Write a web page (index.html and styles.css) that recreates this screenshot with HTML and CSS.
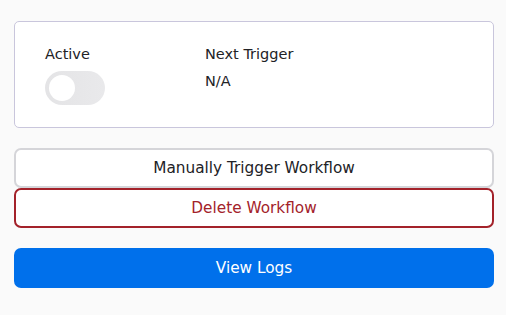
FILE: index.html
```html
<!DOCTYPE html>
<html lang="en">
<head>
    <meta charset="UTF-8">
    <meta name="viewport" content="width=device-width, initial-scale=1.0">
    <title>Workflow</title>
    <link rel="stylesheet" href="styles.css">
</head>
<body>
    <div class="panel">
        <div class="status-card">
            <div class="status-item">
                <div class="status-label">Active</div>
                <label class="toggle">
                    <input type="checkbox" class="toggle-input">
                    <span class="toggle-track"></span>
                </label>
            </div>
            <div class="status-item">
                <div class="status-label">Next Trigger</div>
                <div class="status-value">N/A</div>
            </div>
        </div>

        <div class="actions">
            <button class="action-button">Manually Trigger Workflow</button>
            <button class="action-button danger">Delete Workflow</button>
        </div>

        <button class="logs-button">View Logs</button>
    </div>
</body>
</html>
```

FILE: styles.css
```css
:root {
    --primary: #0070eb;
    --danger: #a3222a;
    --background: #fafafa;
    --text: #222226;
}

* {
    box-sizing: border-box;
    margin: 0;
    padding: 0;
}

body {
    font-family: 'DejaVu Sans', sans-serif;
    background-color: var(--background);
    color: var(--text);
    padding: 21px 12px 0 14px;
}

.status-card {
    background: #fff;
    border: 1px solid #c9c6dc;
    border-radius: 5px;
    height: 107px;
    padding: 23px 30px;
    display: grid;
    grid-template-columns: 160px 1fr;
}

.status-label {
    font-size: 14.5px;
    line-height: 18px;
    margin-bottom: 8px;
}

.status-value {
    font-size: 14.5px;
    line-height: 20px;
}

.toggle {
    display: inline-block;
    position: relative;
    width: 60px;
    height: 34px;
}

.toggle-input {
    display: none;
}

.toggle-track {
    display: block;
    width: 100%;
    height: 100%;
    border-radius: 17px;
    background: linear-gradient(90deg, #e4e4e6, #e9e9eb);
}

.toggle-track::before {
    content: '';
    position: absolute;
    left: 4px;
    top: 4px;
    width: 26px;
    height: 26px;
    border-radius: 50%;
    background: #fff;
}

.actions {
    margin-top: 20px;
    display: flex;
    flex-direction: column;
}

.action-button,
.logs-button {
    font-family: inherit;
    font-size: 15.3px;
    width: 100%;
    height: 40px;
    border-radius: 7px;
    cursor: pointer;
}

.action-button {
    background: #fff;
    color: var(--text);
    border: 2px solid #d5d5d9;
}

.action-button.danger {
    color: var(--danger);
    border-color: var(--danger);
}

.logs-button {
    margin-top: 20px;
    background: var(--primary);
    color: #fff;
    border: none;
}
```
